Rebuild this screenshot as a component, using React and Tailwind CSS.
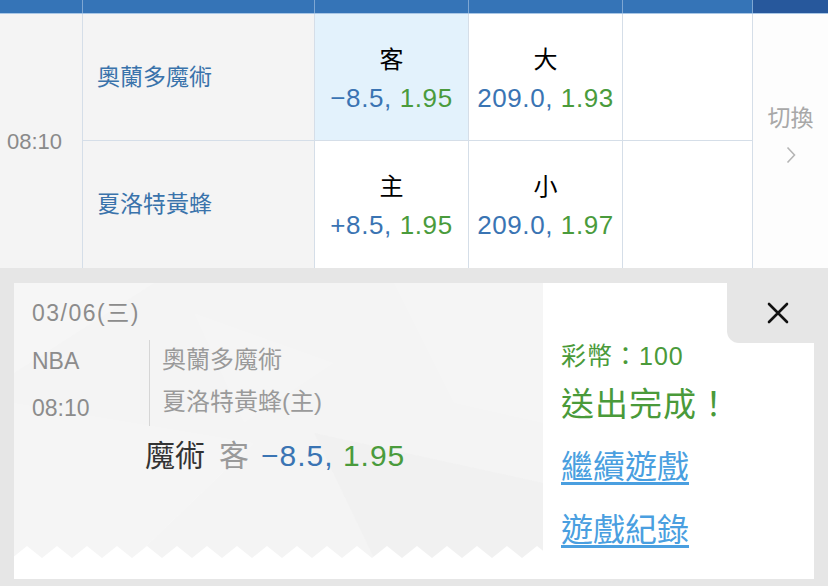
import React from 'react';

const cols = ['w-[83px]', 'w-[232px]', 'w-[154px]', 'w-[154px]', 'w-[130px]'];

// 賽事資料
const rows = [
  { team: '奧蘭多魔術', side: '客', spread: '−8.5,', spreadOdds: '1.95', ou: '大', total: '209.0,', totalOdds: '1.93', picked: true },
  { team: '夏洛特黃蜂', side: '主', spread: '+8.5,', spreadOdds: '1.95', ou: '小', total: '209.0,', totalOdds: '1.97', picked: false },
];

function OddsCell({ label, line, odds, picked, last }) {
  return (
    <div
      className={`flex flex-col items-center pt-[31px] border-r border-[#d5dee8] ${last ? '' : 'border-b'} ${
        picked ? 'bg-[#e3f2fc]' : 'bg-white'
      }`}
    >
      <div className="h-[30px] leading-[30px] text-[24px] text-black">{label}</div>
      <div className="mt-[5px] h-[36px] leading-[36px] text-[26px] tracking-[0.6px] whitespace-nowrap">
        <span className="text-[#3a74b3]">{line}</span> <span className="text-[#4a9b3c]">{odds}</span>
      </div>
    </div>
  );
}

function Zigzag() {
  // 票券底部鋸齒
  const pts = ['0,12'];
  for (let x = -2; x < 540; x += 30) {
    pts.push(`${x},12`, `${x + 15},0`, `${x + 30},12`);
  }
  pts.push('529,12');
  return (
    <svg width="529" height="12" viewBox="0 0 529 12" className="block">
      <polygon points={pts.join(' ')} fill="#ffffff" />
    </svg>
  );
}

function Texture() {
  return (
    <svg width="529" height="275" viewBox="0 0 529 275" className="absolute inset-0">
      <polygon points="0,0 140,0 0,90" fill="#ffffff" opacity="0.18" />
      <polygon points="380,0 529,0 529,140 440,120" fill="#ffffff" opacity="0.15" />
      <polygon points="0,120 240,160 120,275 0,275" fill="#ffffff" opacity="0.15" />
      <polygon points="300,150 529,200 529,275 360,275" fill="#ececec" opacity="0.3" />
      <polygon points="180,30 320,80 230,140" fill="#ffffff" opacity="0.12" />
    </svg>
  );
}

export default function App() {
  return (
    <div className="w-[828px] h-[586px] overflow-hidden bg-[#e6e6e6] font-['Liberation_Sans','Noto_Sans_CJK_TC',sans-serif]">
      {/* 表頭 */}
      <div className="flex h-[14px] border-b border-[#a9c7e6]">
        {cols.map((c, i) => (
          <div key={i} className={`${c} bg-[#3574b7] border-r border-[#7ea7d3]`} />
        ))}
        <div className="flex-1 bg-[#27589c]" />
      </div>

      {/* 賽事表格 */}
      <div className="grid grid-cols-[83px_232px_154px_154px_130px_75px] grid-rows-[127px_127px] bg-white">
        <div className="row-span-2 flex items-center pl-[7px] bg-[#f4f4f4] border-r border-[#d5dee8] text-[22px] text-[#8a8a8a]">
          08:10
        </div>
        {rows.map((r, i) => (
          <React.Fragment key={r.team}>
            <div
              className={`flex items-center pl-[14px] bg-[#f4f4f4] border-r border-[#d5dee8] text-[23px] text-[#3a73ab] ${
                i === 0 ? 'border-b' : ''
              }`}
            >
              {r.team}
            </div>
            <OddsCell label={r.side} line={r.spread} odds={r.spreadOdds} picked={r.picked} last={i === 1} />
            <OddsCell label={r.ou} line={r.total} odds={r.totalOdds} last={i === 1} />
            <div className={`bg-white border-r border-[#d5dee8] ${i === 0 ? 'border-b' : ''}`} />
            {i === 0 && (
              <div className="row-span-2 flex flex-col items-center pt-[89px] bg-[#fdfdfd]">
                <div className="h-[30px] leading-[30px] text-[23px] text-[#a8a8a8]">切換</div>
                <svg width="10" height="18" viewBox="0 0 10 18" className="mt-[13px]">
                  <path d="M1.5 1.5 L8.5 9 L1.5 16.5" fill="none" stroke="#b5b5b5" strokeWidth="1.6" />
                </svg>
              </div>
            )}
          </React.Fragment>
        ))}
      </div>

      {/* 投注完成 */}
      <div className="relative pt-[15px] pl-[14px] pr-[14px]">
        <div className="flex h-[296px] bg-white">
          <div className="w-[529px] flex flex-col">
            <div className="relative h-[275px] bg-[#f4f4f4] flex flex-col">
              <Texture />
              <div className="relative flex flex-col pt-[15px] pl-[18px] text-[23px] text-[#8c8c8c]">
                <div className="h-[30px] leading-[30px] tracking-[1.5px]">03/06(三)</div>
                <div className="mt-[12px] flex">
                  <div className="w-[118px] border-r border-[#d6d6d6]">
                    <div className="h-[42px] leading-[42px]">NBA</div>
                    <div className="mt-[8px] h-[36px] leading-[36px]">08:10</div>
                  </div>
                  <div className="pl-[12px] text-[24px] text-[#9a9a9a]">
                    <div className="h-[40px] leading-[40px]">奧蘭多魔術</div>
                    <div className="h-[44px] leading-[44px]">夏洛特黃蜂(主)</div>
                  </div>
                </div>
                <div className="mt-[10px] ml-[113px] flex h-[40px] leading-[40px] text-[30px] whitespace-nowrap">
                  <span className="text-[#333333]">魔術</span>
                  <span className="ml-[14px] text-[#9a9a9a]">客</span>
                  <span className="ml-[12px] tracking-[1px]">
                    <span className="text-[#3a74b3]">−8.5,</span> <span className="text-[#4a9b3c]">1.95</span>
                  </span>
                </div>
              </div>
              <div className="mt-auto relative">
                <Zigzag />
              </div>
            </div>
          </div>

          <div className="flex-1 flex flex-col pt-[56px] pl-[18px]">
            <div className="h-[34px] leading-[34px] text-[25px] tracking-[1px] text-[#4a9a3a]">彩幣：100</div>
            <div className="mt-[10px] h-[44px] leading-[44px] text-[33px] tracking-[1px] text-[#4a9a3a]">送出完成！</div>
            <a href="#" className="mt-[20px] h-[40px] leading-[40px] text-[32px] text-[#4a9fe0] underline underline-offset-[4px]">
              繼續遊戲
            </a>
            <a href="#" className="mt-[23px] h-[40px] leading-[40px] text-[32px] text-[#4a9fe0] underline underline-offset-[4px]">
              遊戲紀錄
            </a>
          </div>
        </div>

        {/* 關閉按鈕 */}
        <button className="absolute right-0 top-[15px] w-[101px] h-[60px] rounded-bl-[12px] bg-[#e6e6e6] flex items-center justify-center">
          <svg width="22" height="22" viewBox="0 0 22 22">
            <path d="M2 2 L20 20 M20 2 L2 20" stroke="#111111" strokeWidth="2.6" strokeLinecap="round" />
          </svg>
        </button>
      </div>
    </div>
  );
}
